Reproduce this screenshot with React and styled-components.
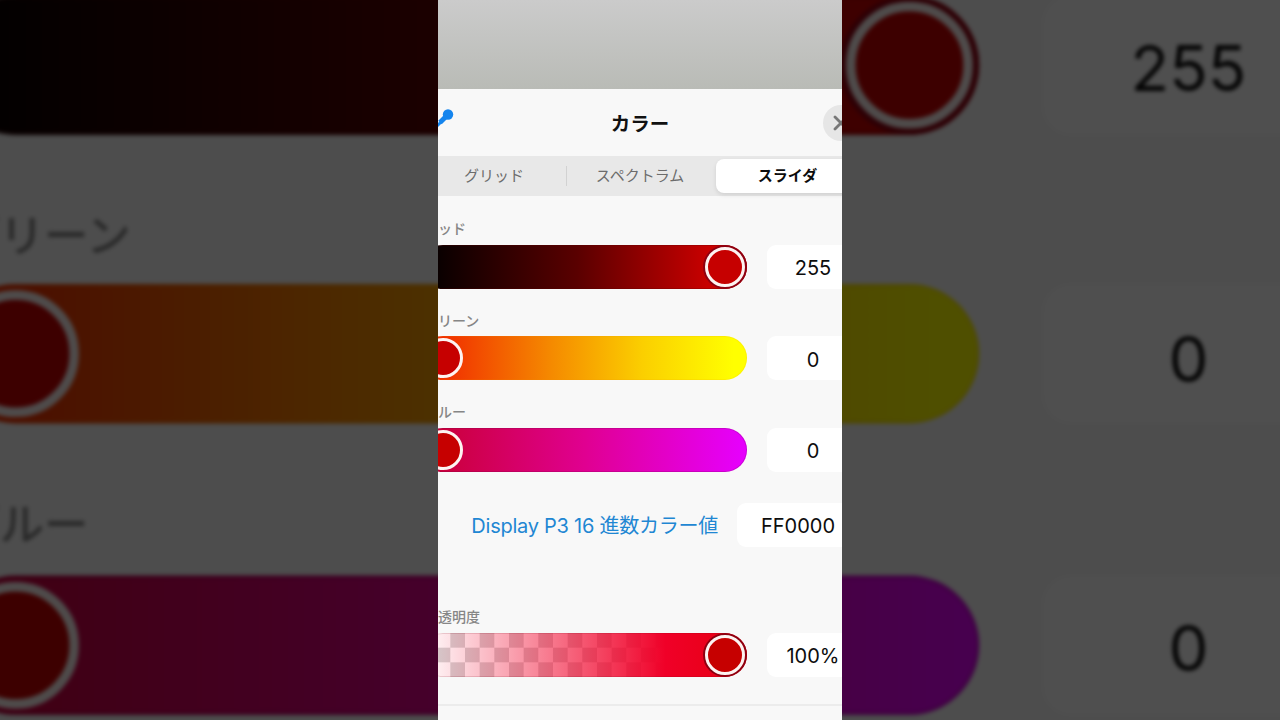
import React from 'react';
import styled, { createGlobalStyle } from 'styled-components';

const GlobalStyle = createGlobalStyle`
  html, body {
    margin: 0;
    background: #000;
    font-family: Inter, "Noto Sans CJK JP", sans-serif;
  }
`;

const Stage = styled.div`
  position: relative;
  width: 1280px;
  height: 720px;
  overflow: hidden;
  display: flex;
  justify-content: center;
`;

// the same screen again, blown up and dimmed behind the video
const Backdrop = styled.div`
  position: absolute;
  top: 0;
  left: 428px;
  width: 424px;
  height: 720px;
  display: flex;
  flex-direction: column;
  transform: scale(3.17);
  filter: blur(0.7px) brightness(0.31);
`;

const Frame = styled.div`
  position: relative;
  width: 404px;
  height: 720px;
  overflow: hidden;
  display: flex;
  flex-direction: column;
`;

const TopStrip = styled.div`
  height: 89px;
  flex: none;
  background: linear-gradient(180deg, #cbcbcb 0%, #b9bbb6 100%);
`;

const Sheet = styled.div`
  flex: 1;
  background: #f8f8f8;
  display: flex;
  flex-direction: column;
  align-items: center;
`;

const SheetBody = styled.div`
  width: 438px;
  flex: none;
`;

const Header = styled.header`
  height: 67px;
  display: flex;
  align-items: center;
  justify-content: space-between;
`;

const Title = styled.h1`
  margin: 0;
  font-size: 19.5px;
  font-weight: 700;
  color: #111;
`;

const PickerIcon = styled.svg`
  width: 36px;
  height: 32px;
`;

const CloseButton = styled.div`
  width: 36px;
  height: 36px;
  border-radius: 50%;
  background: #e6e6e6;
  display: flex;
  align-items: center;
  justify-content: center;
  color: #777;
`;

const Segments = styled.div`
  height: 40px;
  box-sizing: border-box;
  padding: 3px 0;
  border-radius: 9px;
  background: #e8e8e8;
  display: grid;
  grid-template-columns: repeat(3, 1fr);
  align-items: center;
`;

const Segment = styled.div`
  height: 34px;
  box-sizing: border-box;
  padding-bottom: 4px;
  margin-left: ${({ $active }) => ($active ? '3px' : '0')};
  display: flex;
  align-items: center;
  justify-content: center;
  font-size: 15px;
  border-radius: 8px;
  color: ${({ $active }) => ($active ? '#0c0c0c' : '#6c6c6c')};
  font-weight: ${({ $active }) => ($active ? 700 : 400)};
  background: ${({ $active }) => ($active ? '#fff' : 'transparent')};
  box-shadow: ${({ $active }) => ($active ? '0 2px 4px rgba(0,0,0,.1)' : 'none')};
  position: relative;

  ${({ $divider }) => $divider && `
    &::before {
      content: '';
      position: absolute;
      left: -1px;
      top: 7px;
      bottom: 7px;
      width: 1px;
      background: #d2d2d2;
    }
  `}
`;

const Channels = styled.div`
  margin-top: 22.2px;
  display: flex;
  flex-direction: column;
  gap: 20.8px;
`;

const Channel = styled.section`
  display: flex;
  flex-direction: column;
  gap: 6.7px;
`;

const ChannelLabel = styled.div`
  height: 20px;
  line-height: 22px;
  padding-left: 3px;
  font-size: 14px;
  font-weight: 500;
  color: #868686;
`;

const ChannelRow = styled.div`
  display: flex;
  gap: 20px;
  align-items: center;
`;

const Track = styled.div`
  width: 326px;
  height: 44px;
  box-sizing: border-box;
  padding: 2px;
  border-radius: 22px;
  display: flex;
  align-items: center;
  justify-content: ${({ $end }) => ($end ? 'flex-end' : 'flex-start')};
  background: ${({ $fill }) => $fill};
  box-shadow: inset 0 0 0 1px ${({ $edge }) => $edge};
`;

const Knob = styled.div`
  width: 40px;
  height: 40px;
  box-sizing: border-box;
  border-radius: 50%;
  border: 3.5px solid #fdf3f1;
  background: #c60000;
  box-shadow: ${({ $rim }) => ($rim ? '0 0 0 2px #8f0010' : 'none')};
`;

const ValueBox = styled.div`
  width: ${({ $wide }) => ($wide ? '122px' : '92px')};
  height: 44px;
  box-sizing: border-box;
  padding-top: 3px;
  border-radius: 9px;
  background: #fff;
  display: flex;
  align-items: center;
  justify-content: center;
  font-size: 20px;
  color: #0d0d0d;
`;

const HexRow = styled.div`
  margin-top: 31.1px;
  display: flex;
  align-items: center;
  justify-content: flex-end;
  gap: 19px;
`;

const HexLabel = styled.div`
  font-size: 20px;
  letter-spacing: -0.25px;
  color: #1f87d3;
`;

const AlphaChannel = styled(Channel)`
  margin-top: 59px;
  gap: 7px;
`;

const Rule = styled.div`
  height: 2px;
  margin: 27px -20px 0;
  background: #ececec;
`;

const CHECKER = 'repeating-conic-gradient(#fff 0 25%, #d4d4d4 0 50%) 0 0 / 29.33px 29.33px';

const channels = [
  {
    label: 'レッド',
    value: '255',
    end: true,
    fill: 'linear-gradient(90deg, #000 0%, #5a0000 48%, #c80000 88%, #c80000 100%)',
    edge: 'rgba(90,0,0,.25)',
  },
  {
    label: 'グリーン',
    value: '0',
    fill: 'linear-gradient(90deg, #f01c00 0%, #f58a00 40%, #fbcf00 68%, #ffff00 96%)',
    edge: 'rgba(240,150,0,.12)',
  },
  {
    label: 'ブルー',
    value: '0',
    fill: 'linear-gradient(90deg, #c80030 0%, #e00090 50%, #e600ff 100%)',
    edge: 'rgba(100,0,70,.2)',
  },
];

function ColorScreen() {
  return (
    <>
      <TopStrip />
      <Sheet>
        <SheetBody>
          <Header>
            <PickerIcon viewBox="0 0 36 32">
              <circle cx="27" cy="7.5" r="5.2" fill="#1585ee" />
              <path d="M25.5 9l-6.5 6.5" stroke="#1585ee" strokeWidth="5" />
              <path d="M20 15l-6 6" stroke="#1585ee" strokeWidth="3" strokeLinecap="round" />
            </PickerIcon>
            <Title>カラー</Title>
            <CloseButton>
              <svg width="16" height="16" viewBox="0 0 16 16">
                <path d="M2 2l12 12M14 2L2 14" stroke="currentColor" strokeWidth="2.8" strokeLinecap="round" />
              </svg>
            </CloseButton>
          </Header>

          <Segments>
            <Segment>グリッド</Segment>
            <Segment $divider>スペクトラム</Segment>
            <Segment $active>スライダ</Segment>
          </Segments>

          <Channels>
            {channels.map((c) => (
              <Channel key={c.label}>
                <ChannelLabel>{c.label}</ChannelLabel>
                <ChannelRow>
                  <Track $fill={c.fill} $edge={c.edge} $end={c.end}>
                    <Knob $rim={c.end} />
                  </Track>
                  <ValueBox>{c.value}</ValueBox>
                </ChannelRow>
              </Channel>
            ))}
          </Channels>

          <HexRow>
            <HexLabel>Display P3 16 進数カラー値</HexLabel>
            <ValueBox $wide>FF0000</ValueBox>
          </HexRow>

          <AlphaChannel>
            <ChannelLabel>不透明度</ChannelLabel>
            <ChannelRow>
              <Track
                $end
                $edge="rgba(120,0,20,.15)"
                $fill={`linear-gradient(90deg, rgba(240,0,40,0) 0%, rgba(240,0,40,1) 75%, #e60010 100%), ${CHECKER}`}
              >
                <Knob $rim />
              </Track>
              <ValueBox>100%</ValueBox>
            </ChannelRow>
          </AlphaChannel>

          <Rule />
        </SheetBody>
      </Sheet>
    </>
  );
}

export default function App() {
  return (
    <Stage>
      <GlobalStyle />
      <Backdrop>
        <ColorScreen />
      </Backdrop>
      <Frame>
        <ColorScreen />
      </Frame>
    </Stage>
  );
}
